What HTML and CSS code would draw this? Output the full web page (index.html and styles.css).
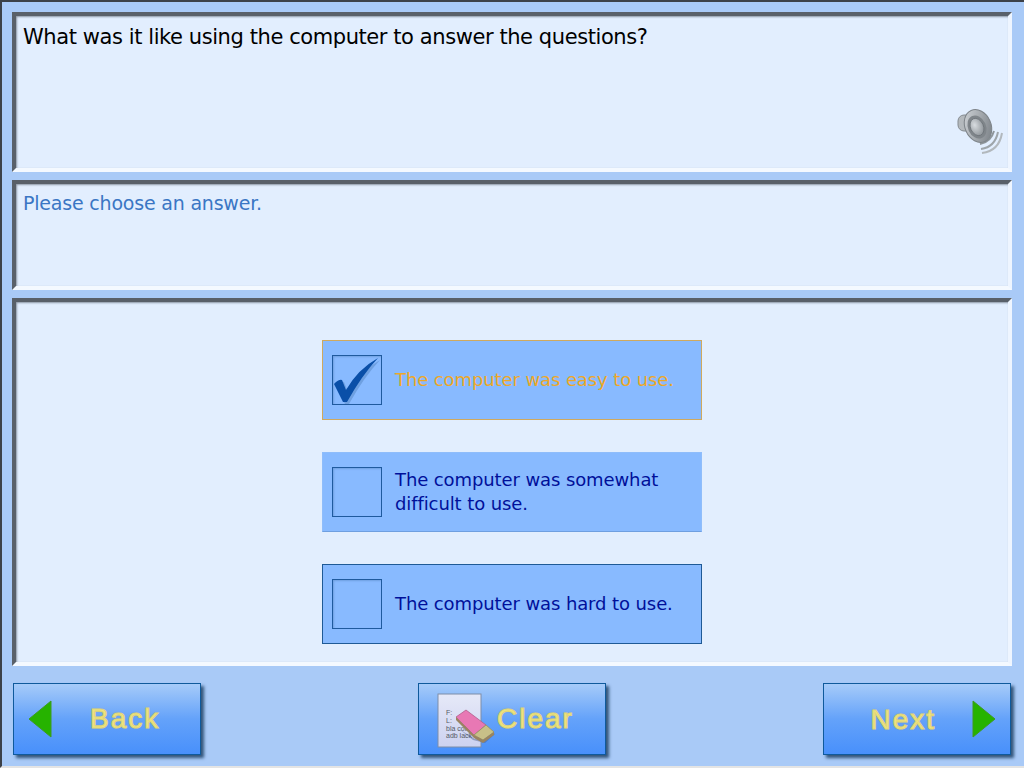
FILE: index.html
```html
<!DOCTYPE html>
<html lang="en">
<head>
  <meta charset="UTF-8" />
  <title>Survey question</title>
  <link rel="stylesheet" href="styles.css">
</head>
<body>
  <div class="screen">
    <section class="panel question-panel">
      <p class="question">What was it like using the computer to answer the questions?</p>
      <svg class="speaker" width="48" height="48" viewBox="0 0 48 48">
        <defs>
          <linearGradient id="cone" x1="0" y1="0" x2="1" y2="1">
            <stop offset="0" stop-color="#d4d8dc" />
            <stop offset="1" stop-color="#747a80" />
          </linearGradient>
          <radialGradient id="dome" cx="0.4" cy="0.35" r="0.7">
            <stop offset="0" stop-color="#d8dce0" />
            <stop offset="1" stop-color="#8d9398" />
          </radialGradient>
        </defs>
        <path d="M24 37 Q35 35 38 24" fill="none" stroke="#8f969b" stroke-width="2" />
        <path d="M25 42 Q39 40 42 25" fill="none" stroke="#9ea5aa" stroke-width="2" />
        <path d="M26 46 Q43 44 46 26" fill="none" stroke="#b2b8bd" stroke-width="2" />
        <rect x="2" y="8" width="15" height="16" rx="6" fill="#b4b9bd" stroke="#858b90" />
        <ellipse cx="22" cy="19" rx="13" ry="17" transform="rotate(-24 22 19)" fill="url(#cone)" stroke="#7d8388" />
        <ellipse cx="21" cy="20" rx="9" ry="12" transform="rotate(-24 21 20)" fill="#7f858a" />
        <ellipse cx="21" cy="20" rx="6.5" ry="9" transform="rotate(-24 21 20)" fill="url(#dome)" stroke="#6d7378" stroke-width="0.8" />
      </svg>
    </section>

    <section class="panel hint-panel">
      <p class="hint">Please choose an answer.</p>
    </section>

    <section class="panel answers-panel">
      <div class="option option-selected">
        <span class="checkbox">
          <svg width="50" height="50" viewBox="0 0 50 50">
            <path d="M4 31 Q9 26 12 27 L16 37 Q28 16 48 5 Q32 22 17 49 L13 49 Z" fill="#3f6fa8" opacity="0.35" />
            <path d="M2 29 Q7 24 10 25 L14 35 Q26 14 46 3 Q30 20 15 47 L11 47 Z" fill="#0a4fa8" />
          </svg>
        </span>
        <span class="option-label">The computer was easy to use.</span>
      </div>
      <div class="option option-plain">
        <span class="checkbox"></span>
        <span class="option-label">The computer was somewhat<br>difficult to use.</span>
      </div>
      <div class="option">
        <span class="checkbox"></span>
        <span class="option-label">The computer was hard to use.</span>
      </div>
    </section>

    <nav class="toolbar">
      <button class="nav-button back-button" type="button">
        <svg width="24" height="38" viewBox="0 0 24 38"><path d="M23 1 V37 L1 19 Z" fill="#26b300" stroke="#3f9a20" /></svg>
        <span class="nav-label">Back</span>
      </button>
      <button class="nav-button clear-button" type="button">
        <svg class="clear-icon" width="60" height="56" viewBox="0 0 60 56">
          <defs>
            <linearGradient id="paper" x1="0" y1="0" x2="0" y2="1">
              <stop offset="0" stop-color="#e6e9f8" />
              <stop offset="1" stop-color="#cdd2f0" />
            </linearGradient>
          </defs>
          <rect x="1" y="1" width="43" height="53" fill="url(#paper)" stroke="#7f8ea8" />
          <text class="note-text" x="9" y="22">F:</text>
          <text class="note-text" x="9" y="30">L:</text>
          <text class="note-text" x="9" y="38">bla cola</text>
          <text class="note-text" x="9" y="45">adb lack</text>
          <path d="M22 36 L36 47 L48 50 L58 41 L50 36 L38 46 Z" fill="#4a5a88" opacity="0.45" />
          <path d="M19 24 L29 17 L49 32 L37 42 Z" fill="#e878b4" stroke="#b0608c" stroke-width="0.8" />
          <path d="M37 42 L49 32 L57 39 L46 47 Z" fill="#c8c088" stroke="#98925f" stroke-width="0.8" />
          <path d="M19 24 L19 27 L37 45 L46 50 L57 42 L57 39 L46 47 L37 42 Z" fill="#9a8460" />
        </svg>
        <span class="nav-label">Clear</span>
      </button>
      <button class="nav-button next-button" type="button">
        <span class="nav-label">Next</span>
        <svg width="24" height="38" viewBox="0 0 24 38"><path d="M1 1 V37 L23 19 Z" fill="#26b300" stroke="#3f9a20" /></svg>
      </button>
    </nav>
  </div>
</body>
</html>
```

FILE: styles.css
```css
html, body {
  margin: 0;
  padding: 0;
}

body {
  width: 1024px;
  height: 768px;
  overflow: hidden;
  font-family: "DejaVu Sans", Verdana, sans-serif;
}

.screen {
  box-sizing: border-box;
  width: 1024px;
  height: 768px;
  padding: 10px 10px 0 10px;
  display: flex;
  flex-direction: column;
  gap: 8px;
  background: #a9caf7;
  border-top: 2px solid #3c4148;
  border-left: 2px solid #3c4148;
  border-bottom: 2px solid #e4e4e4;
}

.panel {
  box-sizing: border-box;
  width: 1000px;
  background: #e2eefe;
  border-top: 4px solid #596069;
  border-left: 4px solid #596069;
  border-bottom: 4px solid #f4f9ff;
  border-right: 4px solid #eef5ff;
  box-shadow: inset 1px 1px 2px #8b95a3;
}

.question-panel {
  height: 160px;
  padding: 7px;
  display: flex;
  flex-direction: column;
  justify-content: space-between;
}

.question {
  margin: 0;
  font-size: 21px;
  line-height: 28px;
  letter-spacing: -0.42px;
  color: #000;
}

.speaker {
  align-self: flex-end;
  margin-right: -3px;
  margin-bottom: 6px;
}

.hint-panel {
  height: 110px;
  padding: 5px 7px;
}

.hint {
  margin: 0;
  font-size: 19px;
  line-height: 28px;
  letter-spacing: -0.2px;
  color: #3a76c4;
}

.answers-panel {
  height: 368px;
  padding-top: 38px;
  display: flex;
  flex-direction: column;
  align-items: center;
  gap: 32px;
}

.option {
  box-sizing: border-box;
  width: 380px;
  height: 80px;
  padding: 0 9px;
  display: flex;
  align-items: center;
  gap: 13px;
  background: #88baff;
  border: 1px solid #1f5a96;
  color: #00109a;
}

.option-selected {
  border-color: #cfa95e;
  color: #eda828;
}

.option-plain {
  border-color: #8fbdfb;
  border-bottom-color: #6f9fe0;
}

.checkbox {
  box-sizing: border-box;
  width: 50px;
  height: 50px;
  flex: none;
  border: 1px solid #1f5a9e;
  box-shadow: inset 1px 1px 2px #6f9fe0;
}

.checkbox svg {
  display: block;
  margin: -1px;
}

.option-label {
  font-size: 18px;
  line-height: 24px;
  letter-spacing: -0.1px;
}

.toolbar {
  margin-top: 9px;
  padding-left: 1px;
  display: flex;
  justify-content: space-between;
  width: 998px;
}

.nav-button {
  box-sizing: border-box;
  width: 188px;
  height: 72px;
  padding: 0 14px;
  display: flex;
  align-items: center;
  border: 1px solid #0f5a9c;
  background: linear-gradient(#a6cbf9, #64a2fa 50%, #4890fb);
  box-shadow: 3px 3px 3px #33557a;
  font-family: "Liberation Sans", Arial, sans-serif;
}

.nav-label {
  font-size: 28px;
  letter-spacing: 2px;
  color: #f0e67e;
  -webkit-text-stroke: 1.1px #e0d678;
  text-shadow: 0 0 2px #8a9a9a;
}

.back-button {
  gap: 38px;
}

.clear-button {
  padding-left: 18px;
  gap: 0;
}

.clear-icon {
  margin-top: 4px;
}

.next-button {
  justify-content: flex-end;
  gap: 36px;
}

.next-button .nav-label {
  margin-top: 2px;
}

.note-text {
  font-family: "Liberation Sans", Arial, sans-serif;
  font-size: 7px;
  fill: #555a66;
}
```
